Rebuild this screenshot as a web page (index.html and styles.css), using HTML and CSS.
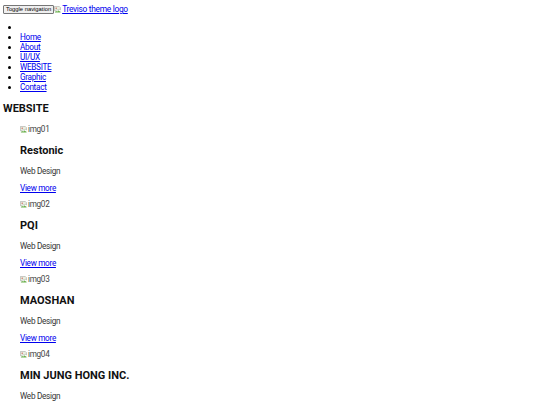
FILE: index.html
```html
<!DOCTYPE html>
<html>
<head>
<meta charset="utf-8">
<link rel="stylesheet" href="styles.css">
</head>
<body>
<nav class="navbar">
  <div class="navbar-header">
    <button class="toggle" type="button">Toggle navigation</button><a class="brand" href="#"><svg class="broken" viewBox="0 0 16 16" width="7" height="7"><path d="M1 1h11l3 3v5l-3-2-3 3-2-2-3 3H1z" fill="#e8f0e0" stroke="#8a8a8a" stroke-width="1"/><path d="M2 14l3-3 2 2 3-3 5 3v2H2z" fill="#6ab04c"/><circle cx="5" cy="5" r="1.5" fill="#c44"/></svg>Treviso theme logo</a>
  </div>
  <ul class="nav">
    <li></li>
    <li><a href="#">Home</a></li>
    <li><a href="#">About</a></li>
    <li><a href="#">UI/UX</a></li>
    <li><a href="#">WEBSITE</a></li>
    <li><a href="#">Graphic</a></li>
    <li><a href="#">Contact</a></li>
  </ul>
</nav>
<section class="works">
  <h2 class="title">WEBSITE</h2>
  <div class="list">
    <div class="item">
      <div class="thumb"><svg class="broken" viewBox="0 0 16 16" width="7" height="7"><path d="M1 1h11l3 3v5l-3-2-3 3-2-2-3 3H1z" fill="#e8f0e0" stroke="#8a8a8a" stroke-width="1"/><path d="M2 14l3-3 2 2 3-3 5 3v2H2z" fill="#6ab04c"/><circle cx="5" cy="5" r="1.5" fill="#c44"/></svg>img01</div>
      <h3>Restonic</h3>
      <p>Web Design</p>
      <a href="#">View more</a>
    </div>
    <div class="item">
      <div class="thumb"><svg class="broken" viewBox="0 0 16 16" width="7" height="7"><path d="M1 1h11l3 3v5l-3-2-3 3-2-2-3 3H1z" fill="#e8f0e0" stroke="#8a8a8a" stroke-width="1"/><path d="M2 14l3-3 2 2 3-3 5 3v2H2z" fill="#6ab04c"/><circle cx="5" cy="5" r="1.5" fill="#c44"/></svg>img02</div>
      <h3>PQI</h3>
      <p>Web Design</p>
      <a href="#">View more</a>
    </div>
    <div class="item">
      <div class="thumb"><svg class="broken" viewBox="0 0 16 16" width="7" height="7"><path d="M1 1h11l3 3v5l-3-2-3 3-2-2-3 3H1z" fill="#e8f0e0" stroke="#8a8a8a" stroke-width="1"/><path d="M2 14l3-3 2 2 3-3 5 3v2H2z" fill="#6ab04c"/><circle cx="5" cy="5" r="1.5" fill="#c44"/></svg>img03</div>
      <h3>MAOSHAN</h3>
      <p>Web Design</p>
      <a href="#">View more</a>
    </div>
    <div class="item">
      <div class="thumb"><svg class="broken" viewBox="0 0 16 16" width="7" height="7"><path d="M1 1h11l3 3v5l-3-2-3 3-2-2-3 3H1z" fill="#e8f0e0" stroke="#8a8a8a" stroke-width="1"/><path d="M2 14l3-3 2 2 3-3 5 3v2H2z" fill="#6ab04c"/><circle cx="5" cy="5" r="1.5" fill="#c44"/></svg>img04</div>
      <h3>MIN JUNG HONG INC.</h3>
      <p>Web Design</p>
      <a href="#">View more</a>
    </div>
  </div>
</section>
</body>
</html>
```

FILE: styles.css
```css
html, body {
  margin: 0;
  padding: 0;
  background: #fff;
}
body {
  padding: 3px;
  font-family: Roboto, Lato, sans-serif;
  font-size: 8.2px;
  line-height: 10px;
  letter-spacing: -0.3px;
  color: #333;
}
a {
  color: #0000ee;
}
.navbar-header {
  display: flex;
  align-items: center;
  height: 12px;
}
.toggle {
  font-family: "Liberation Sans", Arial, sans-serif;
  font-size: 5.8px;
  line-height: 7px;
  letter-spacing: 0;
  height: 9px;
  padding: 0 2px;
  margin: 0;
  color: #000;
  background: #efefef;
  border: 1px solid #767676;
  border-radius: 1px;
}
.brand {
  display: flex;
  align-items: center;
  font-size: 8.4px;
}
.broken {
  display: inline-block;
  flex: none;
  margin-right: 1px;
}
.nav {
  margin: 7px 0 0;
  padding-left: 17px;
  list-style: disc;
  color: #000;
}
.nav li {
  height: 10px;
}
.title {
  margin: 10px 0 0;
  font-size: 11px;
  line-height: 14px;
  letter-spacing: 0;
  font-weight: 700;
  color: #111;
}
.list {
  margin-top: 8px;
  padding-left: 17px;
}
.item {
  padding-bottom: 6px;
}
.thumb {
  display: flex;
  align-items: center;
  height: 10px;
  color: #444;
}
.item h3 {
  margin: 10px 0 0;
  font-size: 11px;
  line-height: 14px;
  letter-spacing: 0;
  color: #111;
}
.item p {
  margin: 8px 0 0;
}
.item a {
  display: block;
  margin-top: 7px;
}
```
